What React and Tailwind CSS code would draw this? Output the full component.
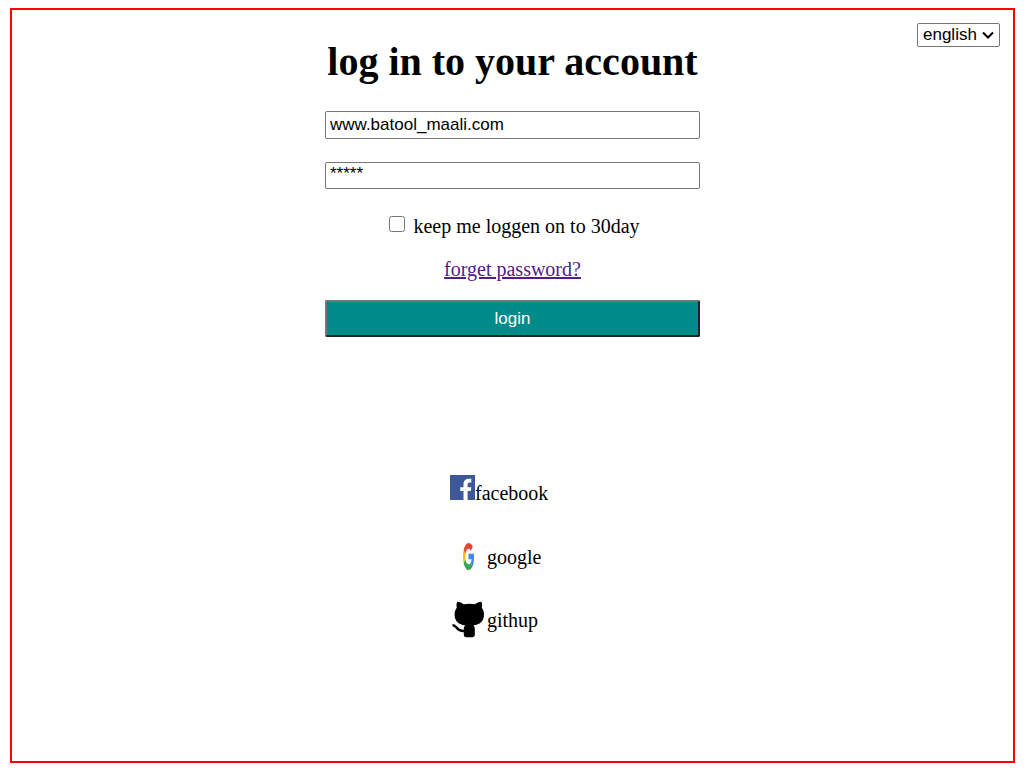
import React from "react";

function FacebookIcon() {
  return (
    <svg viewBox="0 0 25 25" className="size-[25px]" aria-hidden="true">
      <rect width="25" height="25" fill="#3b5998" />
      <path
        fill="#fff"
        d="M13.500 25v-9h-3.300v-3.700h3.300V9.300C13.500 5.800 15.600 3.700 19 3.700c1 0 1.800.1 2.300.1v3.700h-1.600c-1.700 0-2.100.8-2.100 2v2.800h3.700l-.5 3.700h-3.200V25z"
      />
    </svg>
  );
}

function GoogleIcon() {
  return (
    <svg viewBox="0 0 37 38" className="h-[38px] w-[37px]" aria-hidden="true">
      <svg x="13" y="6" width="11" height="27" viewBox="4 4 40 40" preserveAspectRatio="none">
        <path fill="#fbbc05" d="M6.300 14.700 13.500 19.500C12 22 12 26 13.200 28.500L6.200 33.600C3.300 27.500 3.300 20.500 6.300 14.700z" />
        <path fill="#ea4335" d="M6.300 14.700C9.700 8.300 16.300 4 24 4c6.200 0 12 2 15.600 5.300L33 15.500c-2.500-2-5.500-3-9-3-5.200 0-9 2.900-10.500 7z" />
        <path fill="#34a853" d="M24 44c6 0 11.400-2 15-5.400l-7-5.500C30 34.600 27.500 35.500 24 35.500c-5.200 0-9.200-3-10.800-7l-7 5C9.500 39.600 16.200 44 24 44z" />
        <path fill="#4285f4" d="M43.600 20H24v8h11.300c-.6 2.200-1.700 3.900-3.300 5.100l7 5.500C42.300 35.300 44 30.500 44 24c0-1.300-.1-2.700-.4-4z" />
      </svg>
    </svg>
  );
}

function GithubIcon() {
  return (
    <svg viewBox="0 0 37 38" className="h-[38px] w-[37px]" aria-hidden="true">
      <path
        fill="#000"
        d="M7.200 1.800c1.800-.2 4.600 1 6.400 2.400 3.400-.7 8-.7 11.400 0 1.800-1.400 4.600-2.600 6.400-2.400.8 2 .9 4 .4 6 1.500 1.800 2.200 4 2.200 6.700 0 7-4.200 10-10.600 10.800.9.900 1.400 2.200 1.400 3.700v5.500c0 1.700-1 2.700-2.600 2.700h-5.800c-1.600 0-2.600-1-2.600-2.700V29c0-1.500.5-2.800 1.400-3.700C8.800 24.500 4.600 21.500 4.600 14.500c0-2.700.7-4.900 2.200-6.700-.5-2-.4-4 .4-6z"
      />
      <path
        d="M2.500 25.200c5-.2 3.500 6.300 11.500 5.700"
        fill="none"
        stroke="#000"
        strokeWidth="2.400"
      />
    </svg>
  );
}

const field =
  "block w-full rounded-xs border border-[#767676] bg-white px-1 font-['Liberation_Sans',Arial,sans-serif] text-[17px]";

export default function App() {
  return (
    <div className="min-h-screen bg-white pt-2 pr-3.5 pb-4 pl-2.5 font-['Liberation_Serif','Times_New_Roman',serif] text-[20px] leading-6 text-black">
      <main className="grid min-h-[calc(100vh-24px)] grid-cols-[1fr_375px_1fr] items-start border-2 border-[#ff0000]">
        <div className="col-start-2 pt-[29px]">
          <form onSubmit={(e) => e.preventDefault()}>
            <h1 className="text-center text-[40px] leading-[46px] font-bold whitespace-nowrap">
              log in to your account
            </h1>
            <input
              type="text"
              aria-label="account"
              defaultValue="www.batool_maali.com"
              className={`${field} mt-[26px] h-7`}
            />
            <input
              type="text"
              aria-label="password"
              defaultValue="*****"
              className={`${field} mt-[23px] h-[27px] pb-1`}
            />
            <label className="mt-[25px] flex items-center justify-center gap-2 pl-1">
              <input type="checkbox" className="mb-1 size-4" />
              keep me loggen on to 30day
            </label>
            <p className="mt-[19px] text-center">
              <a href="#forget" className="text-[#551a8b] underline">
                forget password?
              </a>
            </p>
            <button
              type="submit"
              className="mt-[19px] block h-[37px] w-full rounded-xs border-2 border-t-[#767676] border-r-[#212121] border-b-[#212121] border-l-[#767676] bg-[#008b8b] font-['Liberation_Sans',Arial,sans-serif] text-[17px] text-white"
            >
              login
            </button>
          </form>
          <ul className="mt-[137px] flex flex-col gap-[25px] pl-[125px]">
            <li className="flex h-[38px] items-start pt-px">
              <FacebookIcon />
              <span className="mt-1.5">facebook</span>
            </li>
            <li className="flex h-[38px] items-center">
              <GoogleIcon />
              <span className="mt-0.5">google</span>
            </li>
            <li className="flex h-[38px] items-center">
              <GithubIcon />
              <span className="mt-0.5">githup</span>
            </li>
          </ul>
        </div>
        <div className="relative mt-[13px] mr-[13px] justify-self-end">
          <select
            aria-label="language"
            className="block h-6 w-[83px] appearance-none rounded-xs border border-[#767676] bg-white pl-[5px] font-['Liberation_Sans',Arial,sans-serif] text-[17px] leading-5"
          >
            <option>english</option>
          </select>
          <svg
            viewBox="0 0 12 8"
            className="pointer-events-none absolute top-2 right-1.5 h-2 w-3"
            aria-hidden="true"
          >
            <path d="M1 1.500 6 6.500 11 1.500" fill="none" stroke="#000" strokeWidth="2" />
          </svg>
        </div>
      </main>
    </div>
  );
}
